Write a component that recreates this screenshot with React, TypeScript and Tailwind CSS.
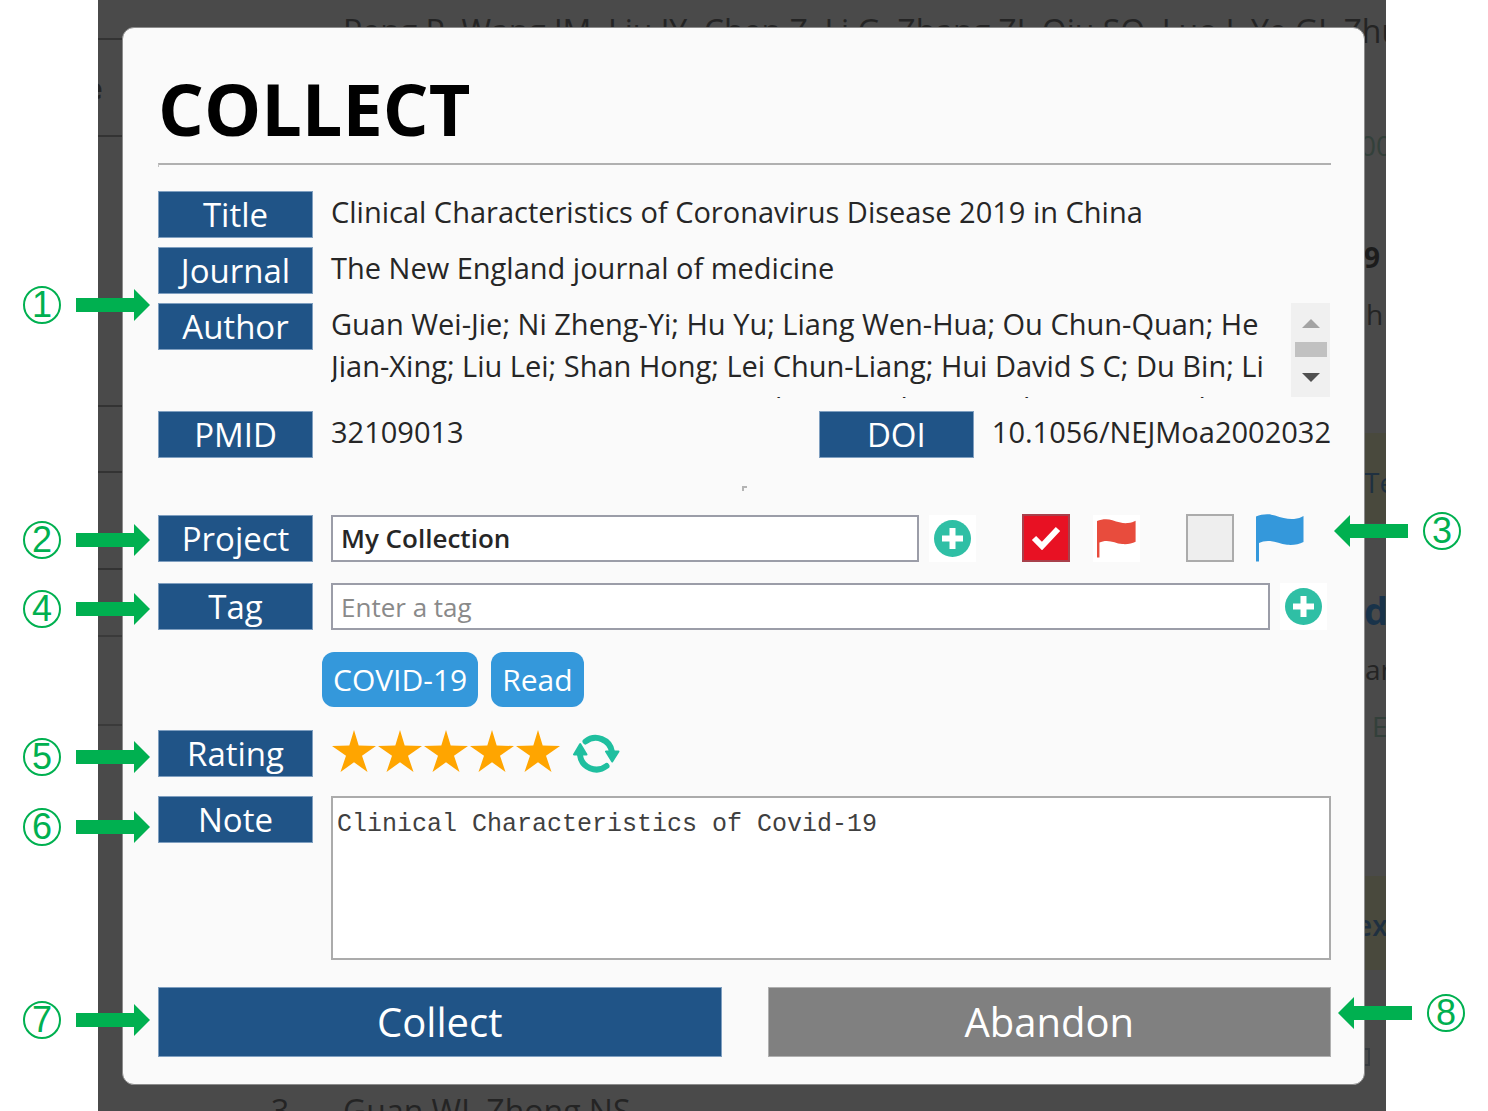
import React from "react";

const authors =
  "Guan Wei-Jie; Ni Zheng-Yi; Hu Yu; Liang Wen-Hua; Ou Chun-Quan; He Jian-Xing; Liu Lei; Shan Hong; Lei Chun-Liang; Hui David S C; Du Bin; Li Lan-Juan; Zeng Guang; Yuen Kwok-Yung; Chen Ru-Chong; Tang Chun-Li";

const labelClass =
  "flex h-[47px] w-[155px] shrink-0 items-center justify-center border border-[#7f9fc0] bg-[#205487] text-[33px] leading-[45px] text-white";

function Label({ text, htmlFor }: { text: string; htmlFor?: string }) {
  return htmlFor ? (
    <label htmlFor={htmlFor} className={labelClass}>
      {text}
    </label>
  ) : (
    <div className={labelClass}>{text}</div>
  );
}

function Arrow({ flip = false }: { flip?: boolean }) {
  return (
    <svg width="74" height="32" viewBox="0 0 74 32" className={flip ? "rotate-180" : ""} aria-hidden="true">
      <path d="M0 9H58V0L74 16L58 32V23H0Z" fill="#00b050" />
    </svg>
  );
}

function Callout({ n, side = "left", className = "" }: { n: number; side?: "left" | "right"; className?: string }) {
  return (
    <div
      className={
        "absolute flex -translate-y-1/2 items-center gap-[15px] " +
        (side === "left" ? "right-full mr-2 " : "left-full ml-[3px] flex-row-reverse ") +
        className
      }
    >
      <span className="flex size-[38px] items-center justify-center rounded-full border-2 border-[#00b050] font-['Liberation_Sans',sans-serif] text-[36px] leading-[34px] text-[#00b050]">
        {n}
      </span>
      <Arrow flip={side === "right"} />
    </div>
  );
}

function PlusButton({ label }: { label: string }) {
  return (
    <button type="button" aria-label={label} className="flex size-[47px] shrink-0 items-center justify-center bg-white">
      <svg width="37" height="37" viewBox="0 0 37 37" aria-hidden="true">
        <circle cx="18.5" cy="18.5" r="18.5" fill="#2fbfa5" />
        <path d="M15.5 8h6v7.500h7.500v6h-7.500V29h-6v-7.500H8v-6h7.500z" fill="#fff" />
      </svg>
    </button>
  );
}

function Flag({ className }: { className: string }) {
  return (
    <svg viewBox="0 0 48 48" className={className} aria-hidden="true">
      <path
        d="M0 2.500C6 0 13-.500 19 1.500C26 4 32 5.500 38 5C42 4.600 45 3.500 47.500 2V28C43 30.500 37 31.300 31 30.800C24 30.200 19 27 12 27C8.500 27 5.500 27.800 3 29V47.500H0Z"
        fill="currentColor"
      />
    </svg>
  );
}

function Star() {
  return (
    <svg width="44" height="42" viewBox="0 0 44 42" aria-hidden="true">
      <path
        d="M22 0L26.700 15.500L44 16L30 25.700L35.500 42L22 32.300L8.500 42L14 25.700L0 16L17.300 15.500Z"
        fill="#ffa500"
      />
    </svg>
  );
}

function Refresh() {
  return (
    <svg width="47" height="40" viewBox="0 0 47 40" aria-hidden="true">
      <g fill="none" stroke="#1fbf9f" strokeWidth="6" strokeLinecap="round">
        <path d="M12.500 7.500A16.500 16.500 0 0 1 39 18" />
        <path d="M33.500 32A16.500 16.500 0 0 1 7 21" />
      </g>
      <path
        d="M33 17.500H45.500L39.200 27.500Z M1 20.500H13.500L7.200 10Z"
        fill="#1fbf9f"
        stroke="#1fbf9f"
        strokeWidth="2"
        strokeLinejoin="round"
      />
    </svg>
  );
}

function PageBehind() {
  return (
    <div aria-hidden="true" className="absolute inset-0 flex justify-between overflow-hidden bg-[#4a4a4a] text-[28px] leading-[42px] text-[#242424]">
      <div className="flex w-6 shrink-0 flex-col overflow-hidden">
        <div className="h-10 shrink-0 border-b-2 border-[#333]" />
        <div className="flex h-[97px] shrink-0 items-center border-b-2 border-[#333]">
          <span className="-ml-3 font-bold">e</span>
        </div>
        <div className="h-[270px] shrink-0 border-b-2 border-[#333]" />
        <div className="h-[66px] shrink-0 border-b-2 border-[#333]" />
        <div className="h-[97px] shrink-0 border-b-2 border-[#333]" />
        <div className="h-[67px] shrink-0 border-b-2 border-[#3a3a3a]" />
        <div className="h-[89px] shrink-0 border-b-2 border-[#3a3a3a]" />
      </div>
      <div className="flex w-0 flex-1 flex-col justify-between text-[32px] whitespace-nowrap">
        <p className="mt-[10px] pl-[221px]">Peng P, Wang JM, Liu JY, Chen Z, Li G, Zhang ZJ, Qiu SQ, Luo J, Ye GJ, Zhu</p>
        <p className="-mb-[21px] flex pl-[149px]">
          <span className="w-[72px]">3</span>
          <span>Guan WJ, Zhong NS.</span>
        </p>
      </div>
      <div className="mt-[54px] flex w-[22px] shrink-0 flex-col overflow-hidden whitespace-nowrap">
        <span className="mt-[70px] -ml-1 text-[#33403a]">00</span>
        <span className="mt-[70px] font-bold text-[#1c1c1c]">9</span>
        <span className="mt-[15px] ml-[2px]">h</span>
        <div className="mt-[98px] flex h-[90px] shrink-0 items-center bg-[#49493d]">
          <span className="pt-2 text-[#1f3040]">Tex</span>
        </div>
        <span className="mt-[66px] text-[38px] font-bold text-[#19334a]">d</span>
        <span className="mt-[17px] ml-[1px]">ar</span>
        <span className="mt-[15px] ml-2 text-[#33403a]">E</span>
        <div className="mt-[129px] flex h-[94px] shrink-0 items-center bg-[#49493d]">
          <span className="-ml-2 pt-1 font-semibold text-[#1f3040]">ext</span>
        </div>
        <span className="mt-[78px] h-[18px] w-[6px] shrink-0 border-2 border-l-0 border-[#363a3e]" />
      </div>
    </div>
  );
}

export default function App() {
  return (
    <div className="min-h-screen bg-white pr-[102px] pl-[98px] font-['Open_Sans','Noto_Sans',sans-serif]">
      <div className="relative min-h-screen pt-[27px] pr-[21px] pb-[26px] pl-6">
        <PageBehind />
        <form
          onSubmit={(e) => e.preventDefault()}
          className="relative rounded-xl border border-[#8c8c8c] bg-[#fafafa] pt-11 pr-[33px] pb-[27px] pl-[35px] text-[29px] leading-[42px] text-[#262626]"
        >
          <h1 className="text-[72px] leading-[72px] font-bold text-black">COLLECT</h1>
          <hr className="mt-[19px] mb-6 h-[4px] border-t-2 border-l border-t-[#b0b0b0] border-l-[#c4c4c4]" />

          <div className="flex flex-col gap-[9px]">
            <div className="flex gap-[18px]">
              <Label text="Title" />
              <p>Clinical Characteristics of Coronavirus Disease 2019 in China</p>
            </div>
            <div className="flex gap-[18px]">
              <Label text="Journal" />
              <p>The New England journal of medicine</p>
            </div>
            <div className="relative flex h-[99px] gap-[18px]">
              <Callout n={1} className="top-[2px]" />
              <Label text="Author" />
              <p className="h-[95px] min-w-0 flex-1 overflow-hidden">{authors}</p>
              <div aria-hidden="true" className="mr-px -ml-2 flex h-[94px] w-[39px] shrink-0 flex-col items-center bg-[#f0f0f0]">
                <svg width="18" height="9" viewBox="0 0 18 9" className="mt-4">
                  <path d="M0 9L9 0L18 9Z" fill="#a3a3a3" />
                </svg>
                <div className="mt-[14px] h-[15px] w-8 bg-[#c1c1c1]" />
                <svg width="18" height="9" viewBox="0 0 18 9" className="mt-4">
                  <path d="M0 0H18L9 9Z" fill="#505050" />
                </svg>
              </div>
            </div>
            <div className="flex gap-[18px]">
              <Label text="PMID" />
              <p className="flex-1">32109013</p>
              <Label text="DOI" />
              <p>10.1056/NEJMoa2002032</p>
            </div>
          </div>

          <hr className="mx-auto mt-7 mb-[23px] h-[5px] w-[5px] border-t-2 border-l-2 border-[#b4b4b4]" />

          <div className="relative flex items-center">
            <Callout n={2} className="top-[26px]" />
            <Callout n={3} side="right" className="top-[17px]" />
            <Label text="Project" htmlFor="project" />
            <input
              id="project"
              type="text"
              defaultValue="My Collection"
              className="ml-[18px] h-[47px] min-w-0 flex-1 border-2 border-[#9b9da8] bg-white px-2 text-[26px] font-semibold"
            />
            <div className="ml-[10px]">
              <PlusButton label="Add project" />
            </div>
            <div className="relative ml-[46px] size-12 shrink-0">
              <input
                id="red-flag"
                type="checkbox"
                defaultChecked
                aria-label="Red flag"
                className="size-12 appearance-none border-2 border-[#ababab] bg-[#eee] checked:border-[#a8404b] checked:bg-[#e81123]"
              />
              <svg width="30" height="24" viewBox="0 0 30 24" className="pointer-events-none absolute top-3 left-[9px]" aria-hidden="true">
                <path d="M3 12L11 20L27 3" fill="none" stroke="#fff" strokeWidth="6" />
              </svg>
            </div>
            <label htmlFor="red-flag" className="ml-[23px] flex size-[47px] shrink-0 items-center justify-center bg-white text-[#e84c3d]">
              <Flag className="size-[39px]" />
            </label>
            <input
              id="blue-flag"
              type="checkbox"
              aria-label="Blue flag"
              className="ml-[46px] size-12 shrink-0 appearance-none border-2 border-[#ababab] bg-[#eee] checked:bg-[#e81123]"
            />
            <label htmlFor="blue-flag" className="mr-[27px] ml-[22px] shrink-0 text-[#3498db]">
              <Flag className="size-12" />
            </label>
          </div>

          <div className="relative mt-[21px] flex items-center">
            <Callout n={4} className="top-[26px]" />
            <Label text="Tag" htmlFor="tag" />
            <input
              id="tag"
              type="text"
              placeholder="Enter a tag"
              className="ml-[18px] h-[47px] min-w-0 flex-1 border-2 border-[#9b9da8] bg-white px-2 text-[26px] placeholder:text-[#8a8a8a]"
            />
            <div className="mr-1 ml-[10px]">
              <PlusButton label="Add tag" />
            </div>
          </div>

          <div className="mt-[22px] flex gap-[13px] pl-[164px] text-[30px] text-white">
            <button type="button" className="h-[55px] rounded-xl bg-[#3498db] px-[11px]">COVID-19</button>
            <button type="button" className="h-[55px] rounded-xl bg-[#3498db] px-[11px]">Read</button>
          </div>

          <div className="relative mt-[23px] flex">
            <Callout n={5} className="top-[27px]" />
            <Label text="Rating" />
            <div className="ml-[19px] flex gap-[2px]">
              {[1, 2, 3, 4, 5].map((v) => (
                <button key={v} type="button" aria-label={`${v} of 5`} className="h-[42px]">
                  <Star />
                </button>
              ))}
            </div>
            <button type="button" aria-label="Reset rating" className="mt-1 ml-[13px] h-10">
              <Refresh />
            </button>
          </div>

          <div className="relative mt-[19px] flex gap-[18px]">
            <Callout n={6} className="top-[31px]" />
            <Label text="Note" htmlFor="note" />
            <textarea
              id="note"
              defaultValue="Clinical Characteristics of Covid-19"
              className="h-[164px] min-w-0 flex-1 resize-none border-2 border-[#ababab] bg-white px-1 py-[10px] font-['Liberation_Mono',monospace] text-[25px] leading-[34px] text-[#404040]"
            />
          </div>

          <div className="relative mt-[27px] grid grid-cols-2 gap-[46px] text-[40px] leading-[60px] text-white">
            <Callout n={7} className="top-[33px]" />
            <Callout n={8} side="right" className="top-[26px] pl-1" />
            <button type="submit" className="h-[70px] border border-[#7f9fc0] bg-[#205487]">Collect</button>
            <button type="button" className="h-[70px] border border-[#b0b0b0] bg-[#808080]">Abandon</button>
          </div>
        </form>
      </div>
    </div>
  );
}
